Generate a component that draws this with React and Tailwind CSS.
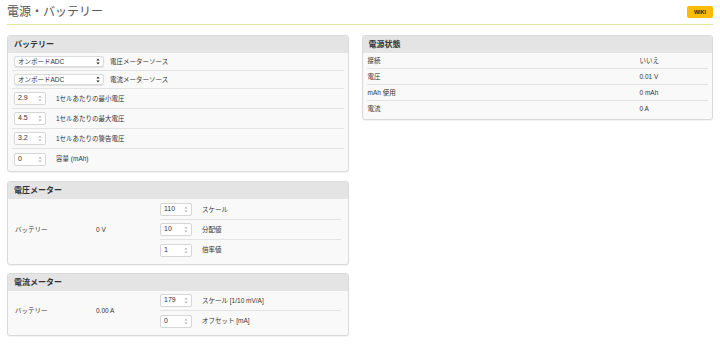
import React from "react";

const font = { fontFamily: '"Liberation Sans", "Noto Sans CJK JP", sans-serif' };

const Spin = ({ dark }) => (
	<svg width="4" height="7" viewBox="0 0 4 7" className="shrink-0">
		<path d="M2 0.5 L3.6 2.6 L0.4 2.6 Z" fill={dark ? "#222" : "#b5b5b5"} />
		<path d="M2 6.5 L3.6 4.4 L0.4 4.4 Z" fill={dark ? "#222" : "#b5b5b5"} />
	</svg>
);

const Select = () => (
	<div className="flex h-[11px] w-[90px] items-center justify-between rounded-[3px] border border-[#dcdcdc] bg-white pl-[3px] pr-[3px] text-[6.5px] text-[#333] shadow-[0_0.5px_1px_rgba(0,0,0,0.1)]">
		<span>オンボードADC</span>
		<Spin dark />
	</div>
);

const NumInput = ({ value }) => (
	<div className="flex h-[13px] w-[32px] items-center justify-between rounded-[2px] border border-[#d6d6d6] bg-white pl-[3px] pr-[3px] text-[7px] text-[#333]">
		<span>{value}</span>
		<Spin />
	</div>
);

const Panel = ({ title, children }) => (
	<div className="overflow-hidden rounded-[3px] border border-[#dadada] bg-[#f9f9f9] shadow-[0_1px_1px_rgba(0,0,0,0.05)]">
		<div className="flex h-[17px] items-center bg-[#e4e4e4] px-[6px] text-[8px] font-bold text-[#333]">{title}</div>
		{children}
	</div>
);

const Row = ({ h, last, children }) => (
	<div className={`mx-[4px] flex items-center gap-[6px] px-[2px] ${h} ${last ? "" : "border-b border-[#e3e3e3]"}`}>
		{children}
	</div>
);

const MeterRow = ({ value, label, last }) => (
	<div className={`flex h-[20px] items-center gap-[10px] ${last ? "" : "border-b border-[#e3e3e3]"}`}>
		<NumInput value={value} />
		<span className="text-[6.5px] text-[#333]">{label}</span>
	</div>
);

const status = [
	["接続", "いいえ"],
	["電圧", "0.01 V"],
	["mAh 使用", "0 mAh"],
	["電流", "0 A"],
];

export default function App() {
	return (
		<div className="h-[344px] w-[720px] overflow-hidden bg-white" style={font}>
			<div className="mx-[7px] flex h-[25px] items-center justify-between border-b border-[#e3e7a4]">
				<div className="text-[12px] text-[#555]">電源・バッテリー</div>
				<div className="flex h-[12px] w-[26px] items-center justify-center rounded-[2px] bg-[#ffbb00] text-[5.5px] font-bold text-[#222]">
					WIKI
				</div>
			</div>

			<div className="flex gap-[13px] px-[7px] pt-[10px]">
				<div className="flex w-[342px] flex-col gap-[8px]">
					<Panel title="バッテリー">
						<div className="pb-[2px]">
							<Row h="h-[18px]">
								<Select />
								<span className="text-[6.5px] text-[#333]">電圧メーターソース</span>
							</Row>
							<Row h="h-[18px]">
								<Select />
								<span className="text-[6.5px] text-[#333]">電流メーターソース</span>
							</Row>
							{[
								["2.9", "1セルあたりの最小電圧"],
								["4.5", "1セルあたりの最大電圧"],
								["3.2", "1セルあたりの警告電圧"],
								["0", "容量 (mAh)"],
							].map(([v, l], i) => (
								<Row key={l} h="h-[20px]" last={i === 3}>
									<NumInput value={v} />
									<span className="ml-[4px] text-[6.5px] text-[#333]">{l}</span>
								</Row>
							))}
						</div>
					</Panel>

					<div className="mt-[1px]">
						<Panel title="電圧メーター">
							<div className="flex pb-[4px] pt-[1px] text-[6.5px] text-[#333]">
								<div className="flex w-[152px] items-center pl-[7px]">
									<span className="w-[81px]">バッテリー</span>
									<span>0 V</span>
								</div>
								<div className="mr-[7px] flex-1">
									<MeterRow value="110" label="スケール" />
									<MeterRow value="10" label="分配値" />
									<MeterRow value="1" label="倍率値" last />
								</div>
							</div>
						</Panel>
					</div>

					<Panel title="電流メーター">
						<div className="flex pb-[4px] text-[6.5px] text-[#333]">
							<div className="flex w-[152px] items-center pl-[7px]">
								<span className="w-[81px]">バッテリー</span>
								<span>0.00 A</span>
							</div>
							<div className="mr-[7px] flex-1">
								<MeterRow value="179" label="スケール [1/10 mV/A]" />
								<MeterRow value="0" label="オフセット [mA]" last />
							</div>
						</div>
					</Panel>
				</div>

				<div className="w-[352px]">
					<Panel title="電源状態">
						<div className="pb-[2px]">
							{status.map(([k, v], i) => (
								<div
									key={k}
									className={`mx-[4px] flex h-[16px] items-center px-[1px] text-[6.5px] text-[#333] ${i === 3 ? "" : "border-b border-[#e3e3e3]"}`}
								>
									<span className="w-[272px]">{k}</span>
									<span>{v}</span>
								</div>
							))}
						</div>
					</Panel>
				</div>
			</div>
		</div>
	);
}
